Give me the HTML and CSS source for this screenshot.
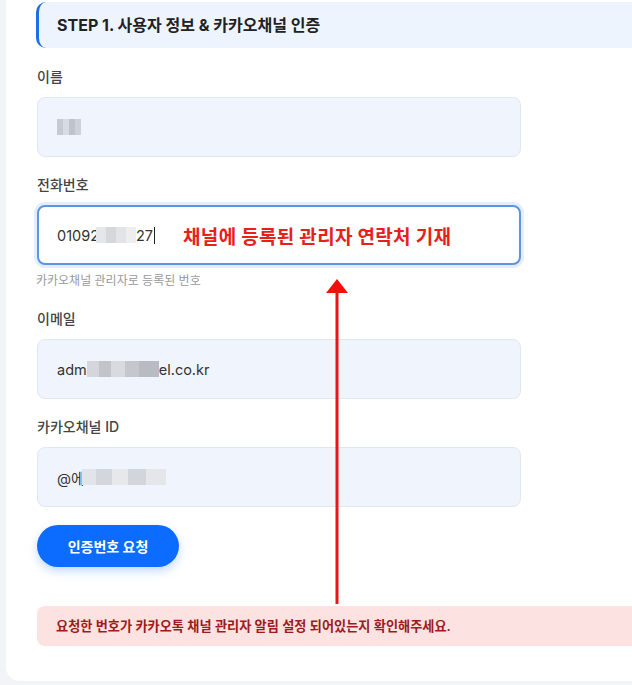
FILE: index.html
```html
<!DOCTYPE html>
<html lang="ko">
<head>
    <meta charset="UTF-8">
    <meta name="viewport" content="width=device-width, initial-scale=1.0">
    <title>STEP 1</title>
    <link rel="stylesheet" href="styles.css">
</head>
<body>
    <div class="card">
        <div class="step-title">STEP 1. 사용자 정보 &amp; 카카오채널 인증</div>

        <div class="field">
            <label>이름</label>
            <div class="input">
                <span class="blur blur-name"></span>
            </div>
        </div>

        <div class="field">
            <label>전화번호</label>
            <div class="input focus">
                <span>01092</span><span class="blur blur-phone"></span><span>27</span><span class="caret"></span>
                <span class="note">채널에 등록된 관리자 연락처 기재</span>
            </div>
            <p class="help">카카오채널 관리자로 등록된 번호</p>
        </div>

        <div class="field">
            <label>이메일</label>
            <div class="input">
                <span>adm</span><span class="blur blur-mail"></span><span>el.co.kr</span>
            </div>
        </div>

        <div class="field">
            <label>카카오채널 ID</label>
            <div class="input">
                <span>@에</span><span class="blur blur-id"></span>
            </div>
        </div>

        <button class="btn">인증번호 요청</button>

        <div class="alert">요청한 번호가 카카오톡 채널 관리자 알림 설정 되어있는지 확인해주세요.</div>

        <!-- 안내용 화살표 -->
        <svg class="arrow" width="24" height="326" viewBox="0 0 24 326">
            <polygon points="12,0 1,14 23,14" fill="#f01010"/>
            <rect x="10.5" y="12" width="3" height="313" fill="#e8141a"/>
        </svg>
    </div>
</body>
</html>
```

FILE: styles.css
```css
body{
    margin: 0;
    padding: 0;
    background-color: #f3f4f7;
    overflow: hidden;
    font-family: Inter, "Noto Sans CJK KR", sans-serif;
    color: #333;
}
.card{
    position: relative;
    width: 720px;
    margin-left: 6px;
    padding: 2px 0 35px 30px;
    background-color: #fff;
    border-radius: 0 0 0 14px;
}
.step-title{
    height: 46px;
    line-height: 46px;
    padding-left: 18px;
    background-color: #eef4fe;
    border-left: 3px solid #1a6fe8;
    border-radius: 10px;
    font-size: 16px;
    font-weight: 700;
    color: #222;
}
.field{
    margin-top: 18px;
    width: 485px;
}
.step-title + .field{
    margin-top: 19px;
}
.field label{
    display: block;
    height: 20px;
    line-height: 20px;
    font-size: 14px;
    font-weight: 500;
    color: #444;
    margin-bottom: 10px;
    padding-left: 1px;
}
.input{
    display: flex;
    align-items: center;
    height: 58px;
    padding-left: 19px;
    margin-left: 1px;
    background-color: #f0f5fd;
    border: 1px solid #e1e7f0;
    border-radius: 8px;
    font-size: 14.5px;
    color: #333;
}
.input.focus{
    height: 56px;
    padding-left: 18px;
    background-color: #fff;
    border: 2px solid #5b96e0;
    box-shadow: 0 0 0 3px #e3edfb;
}
.blur{
    display: inline-block;
    height: 16px;
}
.blur-name{
    width: 24px;
    background:
        linear-gradient(90deg, #c6cad3 0 6px, #d8dbe2 6px 12px, #bfc3cc 12px 18px, #cdd1d9 18px 24px);
}
.blur-phone{
    width: 40px;
    margin-left: -3px;
    background:
        linear-gradient(90deg, #e6e7ea 0 10px, #d6d7db 10px 20px, #e3e4e7 20px 30px, #eeeeef 30px 40px);
}
.blur-mail{
    width: 72px;
    background:
        linear-gradient(90deg, #d4d6db 0 12px, #c2c4ca 12px 24px, #d8dadf 24px 38px, #c5c7cd 38px 52px, #b9bbc2 52px 72px);
}
.blur-id{
    width: 84px;
    margin-left: -2px;
    background:
        linear-gradient(90deg, #e2e4e9 0 14px, #d3d6dc 14px 30px, #e6e8ec 30px 46px, #d2d5db 46px 64px, #e4e6ea 64px 84px);
}
.caret{
    display: inline-block;
    width: 1px;
    height: 17px;
    margin-left: 1px;
    background-color: #222;
}
.note{
    margin-left: 28px;
    font-size: 19px;
    font-weight: 700;
    color: #e8201a;
    letter-spacing: 0.3px;
}
.help{
    margin: 8px 0 0 0;
    height: 16px;
    line-height: 16px;
    font-size: 12px;
    color: #999;
}
.field:has(.help) + .field{
    margin-top: 20px;
}
.btn{
    display: block;
    margin-top: 18px;
    margin-left: 1px;
    width: 142px;
    height: 42px;
    border: none;
    border-radius: 21px;
    background-color: #0b6cff;
    color: #fff;
    font-family: Inter, "Noto Sans CJK KR", sans-serif;
    font-size: 14px;
    font-weight: 700;
    box-shadow: 0 4px 10px rgba(11, 108, 255, 0.25);
}
.alert{
    margin-top: 39px;
    margin-left: 1px;
    height: 40px;
    line-height: 40px;
    padding-left: 19px;
    background-color: #fde2e2;
    border-radius: 8px;
    font-size: 13.2px;
    font-weight: 600;
    color: #9e1b1b;
}
.arrow{
    position: absolute;
    left: 319px;
    top: 279px;
}
```
